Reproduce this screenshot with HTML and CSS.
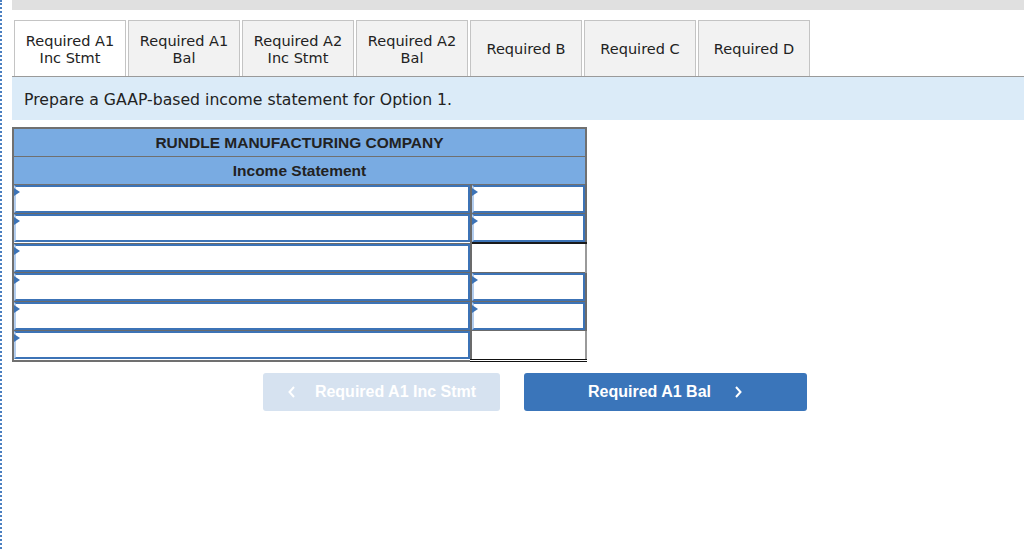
FILE: index.html
```html
<!DOCTYPE html>
<html>
<head>
<meta charset="utf-8">
<link rel="stylesheet" href="styles.css">
</head>
<body>
<div class="page">
  <div class="topbar"></div>
  <div class="tabs">
    <div class="tab active">Required A1<br>Inc Stmt</div>
    <div class="tab">Required A1<br>Bal</div>
    <div class="tab">Required A2<br>Inc Stmt</div>
    <div class="tab">Required A2<br>Bal</div>
    <div class="tab">Required B</div>
    <div class="tab">Required C</div>
    <div class="tab">Required D</div>
  </div>
  <div class="instructions">Prepare a GAAP-based income statement for Option 1.</div>
  <table class="stmt">
    <tr><th colspan="2">RUNDLE MANUFACTURING COMPANY</th></tr>
    <tr><th colspan="2">Income Statement</th></tr>
    <tr><td class="label"><div class="inp"></div></td><td class="amt"><div class="inp"></div></td></tr>
    <tr><td class="label"><div class="inp"></div></td><td class="amt under"><div class="inp"></div></td></tr>
    <tr><td class="label"><div class="inp"></div></td><td class="amt plain"></td></tr>
    <tr><td class="label"><div class="inp"></div></td><td class="amt"><div class="inp"></div></td></tr>
    <tr><td class="label"><div class="inp"></div></td><td class="amt"><div class="inp"></div></td></tr>
    <tr><td class="label"><div class="inp"></div></td><td class="amt plain total"></td></tr>
  </table>
  <div class="nav">
    <div class="btn prev"><svg class="chev" width="10" height="14" viewBox="0 0 10 14"><path d="M7 2 L2.5 7 L7 12" fill="none" stroke="#fff" stroke-width="2"/></svg>Required A1 Inc Stmt</div>
    <div class="btn next">Required A1 Bal<svg class="chev right" width="10" height="14" viewBox="0 0 10 14"><path d="M3 2 L7.5 7 L3 12" fill="none" stroke="#fff" stroke-width="2"/></svg></div>
  </div>
</div>
</body>
</html>
```
FILE: styles.css
```css
html, body {
  margin: 0;
  padding: 0;
  background: #fff;
}
body {
  width: 1024px;
  height: 549px;
  overflow: hidden;
}
.page {
  box-sizing: border-box;
  height: 549px;
  border-left: 2px dotted #4a7fc1;
  padding-left: 10px;
  font-family: "DejaVu Sans", Verdana, sans-serif;
  color: #222;
}
.topbar {
  height: 10px;
  background: #e0e0e0;
}
.tabs {
  display: flex;
  gap: 2px;
  margin-top: 10px;
  padding-left: 2px;
  border-bottom: 1px solid #9a9a9a;
}
.tab {
  box-sizing: border-box;
  width: 112px;
  height: 56px;
  border: 1px solid #c4c4c4;
  border-bottom: none;
  background: #f2f2f2;
  display: flex;
  align-items: center;
  justify-content: center;
  text-align: center;
  font-size: 14.5px;
  line-height: 17px;
  color: #222;
  padding-top: 2px;
}
.tab.active {
  background: #fff;
}
.instructions {
  height: 43px;
  background: #dbebf8;
  display: flex;
  align-items: center;
  padding-left: 12px;
  font-size: 15.7px;
  color: #222;
  padding-top: 2px;
  box-sizing: border-box;
}
.stmt {
  margin-top: 7px;
  border-collapse: collapse;
  width: 575px;
  border: 2px solid #707070;
  font-family: "Liberation Sans", Arial, sans-serif;
}
.stmt th {
  background: #79abe2;
  height: 27px;
  padding: 0;
  font-size: 15.5px;
  font-weight: bold;
  color: #222;
  border-bottom: 1px solid #707070;
}
.stmt td {
  padding: 0;
  height: 28px;
  border: 1px solid #6b6b6b;
  border-width: 1px 2px 1px 0;
}
.stmt td.label {
  width: 456px;
}
.inp {
  position: relative;
  box-sizing: border-box;
  height: 28px;
  border: 2px solid #3c73b6;
  border-left: 2px solid #b3cdee;
  background: #fff;
}
.inp::before {
  content: "";
  position: absolute;
  left: -2px;
  top: 1px;
  border-left: 6px solid #3c73b6;
  border-top: 4px solid transparent;
  border-bottom: 4px solid transparent;
}
.stmt td.under {
  border-bottom: 2px solid #1a1a1a;
}
.stmt td.plain {
  border-right: 2px solid #9a9a9a;
  background: #fff;
}
.stmt td.total {
  border-top: 1px solid #111;
  border-bottom: 3px double #111;
}
.nav {
  display: flex;
  gap: 24px;
  margin-top: 11px;
  padding-left: 251px;
}
.btn {
  height: 38px;
  border-radius: 3px;
  display: flex;
  align-items: center;
  justify-content: center;
  font-family: "Liberation Sans", Arial, sans-serif;
  font-weight: bold;
  font-size: 16px;
  color: #fff;
}
.btn.prev {
  width: 237px;
  background: #d6e2f0;
}
.btn.next {
  width: 283px;
  background: #3a75ba;
}
.chev {
  margin-right: 18px;
}
.chev.right {
  margin-right: 0;
  margin-left: 22px;
}
```
